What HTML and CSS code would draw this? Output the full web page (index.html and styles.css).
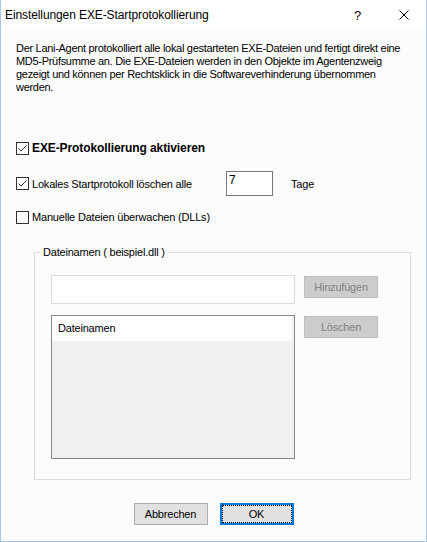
FILE: index.html
```html
<!DOCTYPE html>
<html lang="de">
<head>
  <meta charset="UTF-8">
  <link rel="stylesheet" href="styles.css">
  <title>Einstellungen EXE-Startprotokollierung</title>
</head>
<body>
  <div class="dialog">
    <header class="titlebar">
      <span class="title">Einstellungen EXE-Startprotokollierung</span>
      <span class="help">?</span>
      <svg class="close" width="10" height="10" viewBox="0 0 10 10">
        <path d="M0.5 0.5 L9.5 9.5 M9.5 0.5 L0.5 9.5" stroke="#000" stroke-width="1" fill="none"/>
      </svg>
    </header>
    <main class="content">
      <p class="intro">Der Lani-Agent protokolliert alle lokal gestarteten EXE-Dateien und fertigt direkt eine<br>MD5-Prüfsumme an. Die EXE-Dateien werden in den Objekte im Agentenzweig<br>gezeigt und können per Rechtsklick in die Softwareverhinderung übernommen<br>werden.</p>

      <div class="check check-main">
        <span class="box"><svg width="11" height="11" viewBox="0 0 11 11"><polyline points="1.5,5.5 4,8 9.5,2.5" stroke="#333" stroke-width="1" fill="none"/></svg></span>
        <span class="label-bold">EXE-Protokollierung aktivieren</span>
      </div>

      <div class="check check-days">
        <span class="box"><svg width="11" height="11" viewBox="0 0 11 11"><polyline points="1.5,5.5 4,8 9.5,2.5" stroke="#333" stroke-width="1" fill="none"/></svg></span>
        <span class="days-label">Lokales Startprotokoll löschen alle</span>
        <div class="days-input">7</div>
        <span class="unit">Tage</span>
      </div>

      <div class="check check-dll">
        <span class="box"></span>
        <span>Manuelle Dateien überwachen (DLLs)</span>
      </div>

      <fieldset class="group">
        <legend>Dateinamen ( beispiel.dll )</legend>
        <div class="row">
          <div class="name-input"></div>
          <button class="btn btn-disabled">Hinzufügen</button>
        </div>
        <div class="row row-list">
          <div class="list">
            <div class="list-head">Dateinamen</div>
          </div>
          <button class="btn btn-disabled">Löschen</button>
        </div>
      </fieldset>

      <div class="actions">
        <button class="btn">Abbrechen</button>
        <button class="btn btn-default">OK</button>
      </div>
    </main>
  </div>
</body>
</html>
```

FILE: styles.css
```css
* {
  box-sizing: border-box;
}

body {
  margin: 0;
  font-family: "Liberation Sans", Arial, sans-serif;
  font-size: 11px;
  letter-spacing: -0.2px;
  color: #000;
  background: #fcfcfc;
}

.dialog {
  width: 427px;
  height: 542px;
  border: 1px solid #a6c8ec;
  border-top: none;
  background: #fcfcfc;
  display: flex;
  flex-direction: column;
}

.titlebar {
  height: 30px;
  background: #fff;
  display: flex;
  align-items: center;
  padding: 0 17px 0 4px;
}

.title {
  flex: 1;
  font-size: 12px;
  letter-spacing: -0.1px;
}

.help {
  font-size: 13px;
  width: 10px;
  margin-right: 35px;
}

.content {
  padding: 12px 15px 0;
}

.intro {
  margin: 0;
  line-height: 13px;
  white-space: nowrap;
  letter-spacing: -0.3px;
}

.check {
  display: flex;
  align-items: center;
  height: 20px;
}

.check-main {
  margin-top: 44px;
}

.check-days {
  margin-top: 13px;
  height: 25px;
}

.check-dll {
  margin-top: 11px;
}

.box {
  width: 13px;
  height: 13px;
  border: 1px solid #333;
  background: #fff;
  margin-right: 3px;
  display: flex;
}

.label-bold {
  font-weight: bold;
  font-size: 12px;
  letter-spacing: -0.1px;
}

.days-label {
  width: 194px;
}

.days-input {
  width: 47px;
  height: 25px;
  border: 1px solid #7a7a7a;
  background: #fff;
  padding: 2px 2px;
  line-height: 13px;
  font-size: 12px;
  align-self: flex-start;
}

.unit {
  margin-left: 18px;
}

.group {
  margin: 19px 0 0 18px;
  width: 377px;
  border: 1px solid #dcdcdc;
  padding: 16px 0 20px 16px;
}

.group legend {
  padding: 0 2px;
  margin-left: -10px;
  line-height: 13px;
}

.row {
  display: flex;
  align-items: flex-start;
  gap: 9px;
}

.row-list {
  margin-top: 11px;
}

.name-input {
  width: 244px;
  height: 29px;
  border: 1px solid #dcdcdc;
  background: #fff;
}

.list {
  width: 244px;
  height: 144px;
  border: 1px solid #828790;
  background: #f0f0f0;
}

.list-head {
  width: 240px;
  height: 25px;
  background: #fff;
  line-height: 25px;
  padding-left: 6px;
}

.btn {
  width: 74px;
  height: 22px;
  margin-top: 1px;
  font-family: "Liberation Sans", Arial, sans-serif;
  font-size: 11px;
  letter-spacing: -0.2px;
  color: #000;
  background: #e1e1e1;
  border: 1px solid #adadad;
  padding: 0;
}

.btn-disabled {
  background: #cccccc;
  border-color: #bfbfbf;
  color: #838383;
}

.btn-default {
  border: 2px solid #0078d7;
  outline: 1px dotted #000;
  outline-offset: -3px;
}

.actions {
  display: flex;
  justify-content: center;
  gap: 12px;
  margin-top: 22px;
}
```
